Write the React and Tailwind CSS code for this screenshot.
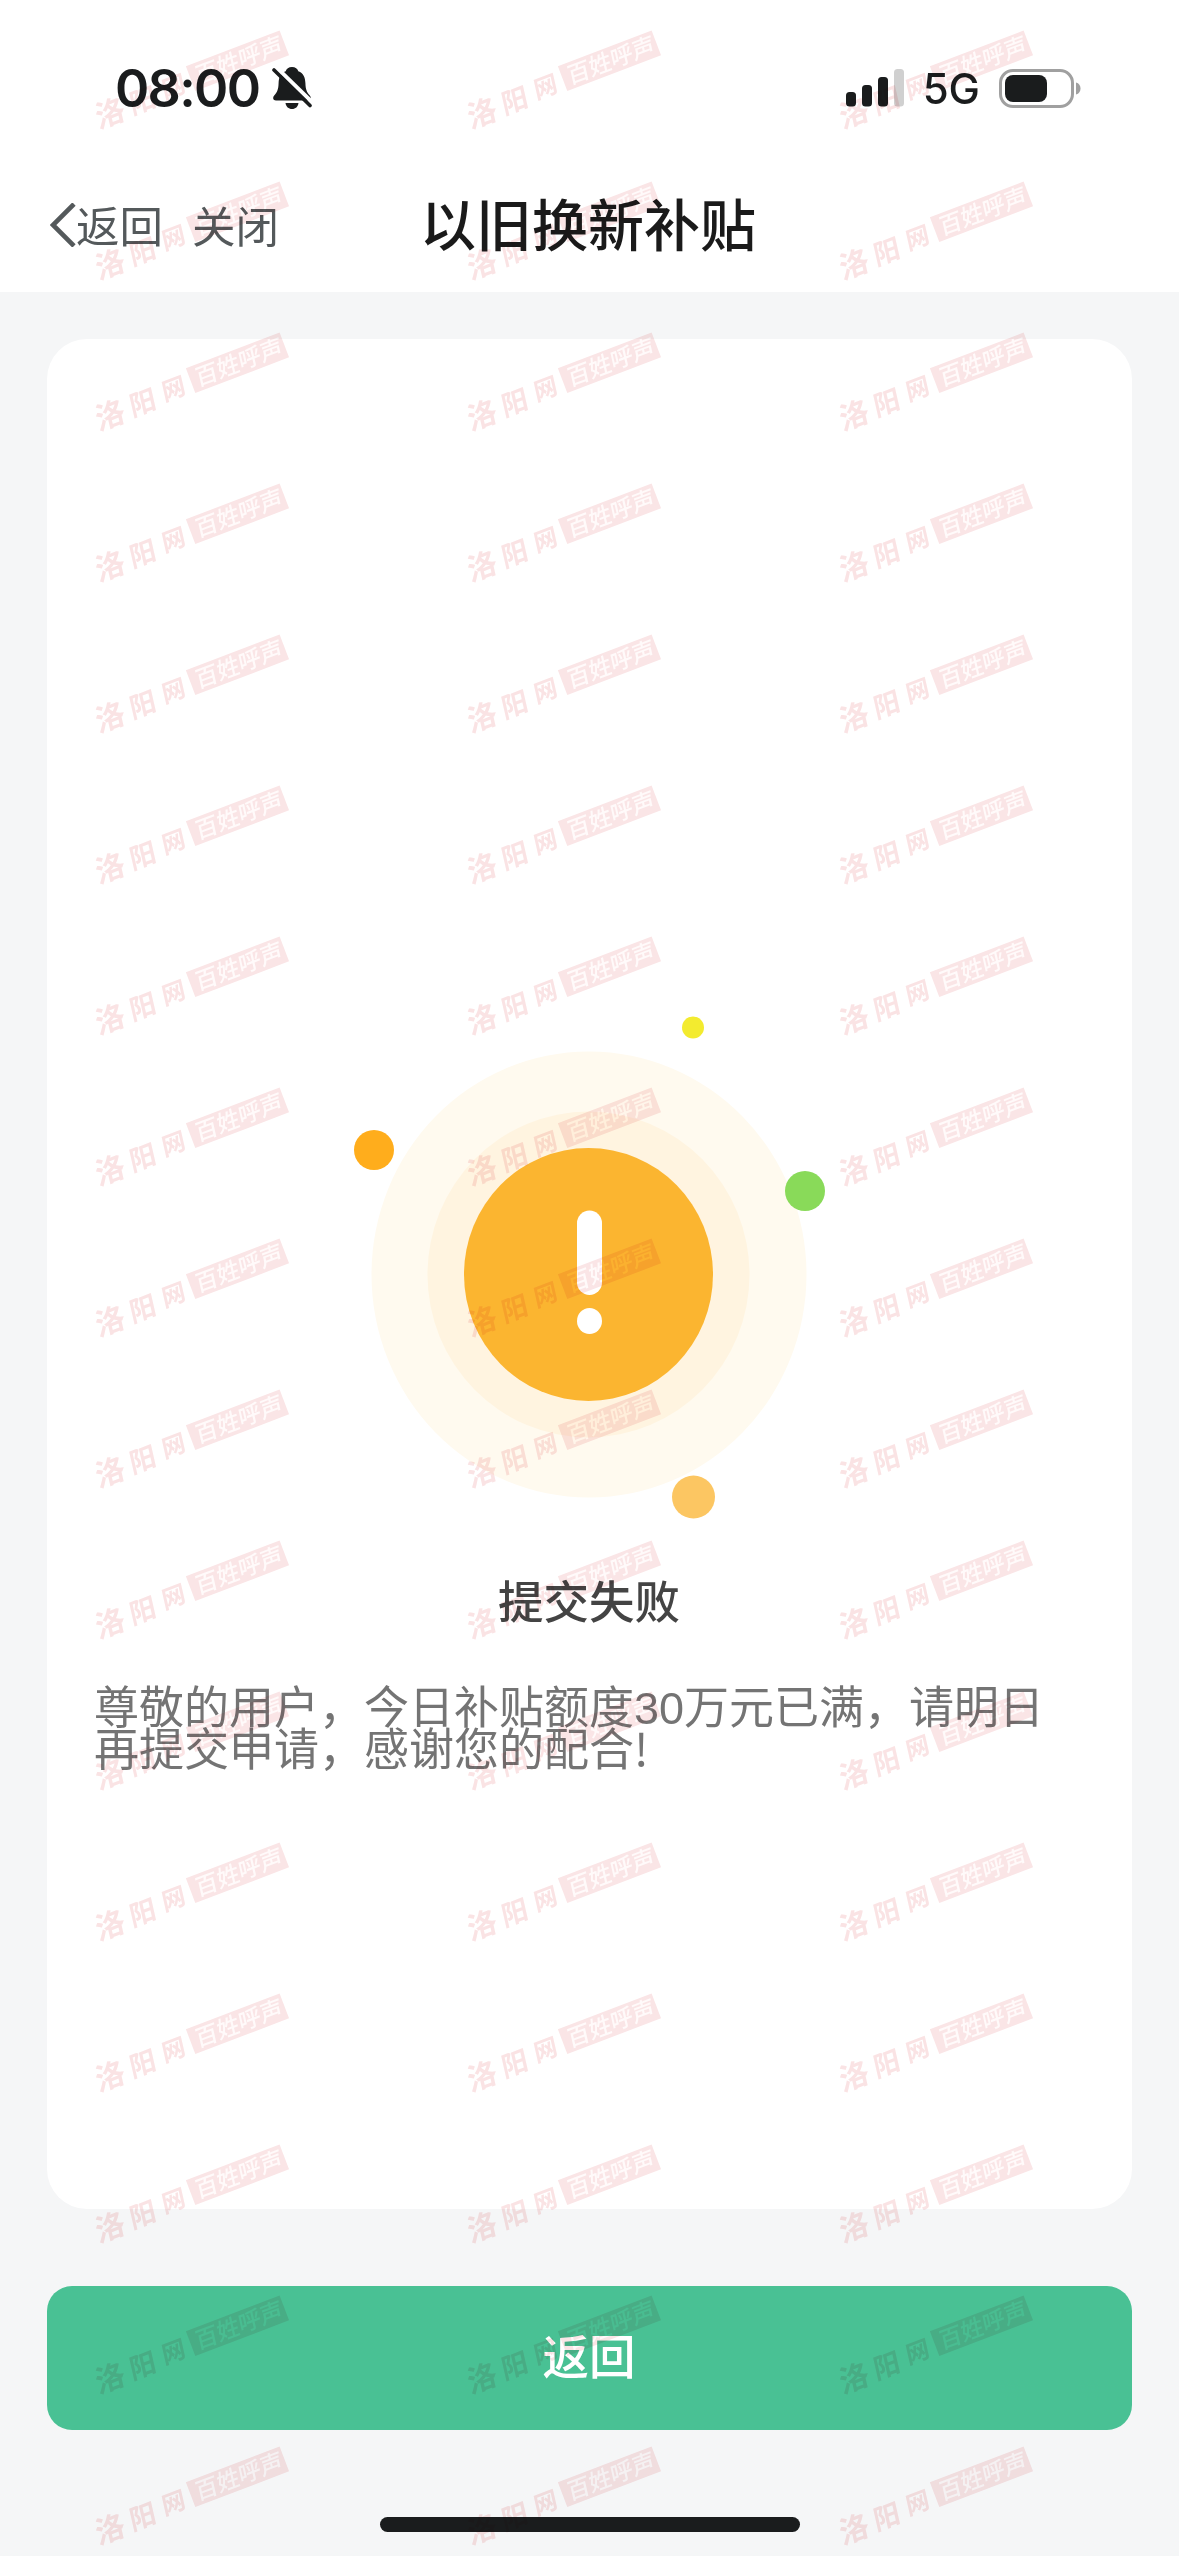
// src/pages/SubmitFailed.jsx
import React from "react";

const ROWS = 17;
const COLS = 3;

function BellOffIcon() {
  return (
    <svg viewBox="0 0 40 44" className="w-10 h-11" fill="none">
      <path
        d="M20 1c-3.400 0-5.600 1.800-6.300 4.300C8.600 7.200 6.800 11.500 6.600 17c-.2 6.500-1.200 8.800-4.400 12.600C.4 31.800 1 34.500 4 34.500h32c3 0 3.500-2.700 1.800-4.900-3.200-3.800-4.200-6.100-4.400-12.600-.2-5.500-2-9.800-7.100-11.700C25.600 2.800 23.400 1 20 1Z"
        fill="#1a1c1d"
      />
      <path d="M13.500 37h13c-.5 3.700-3 6-6.500 6s-6-2.300-6.500-6Z" fill="#1a1c1d" />
      <path d="M4.500 1.500 42 38" stroke="#fff" strokeWidth="4" />
      <path d="M2 4 38 39.500" stroke="#1a1c1d" strokeWidth="3.600" strokeLinecap="round" />
    </svg>
  );
}

function SignalIcon() {
  return (
    <svg viewBox="0 0 58 38" className="w-[58px] h-[38px]" fill="#1a1c1d">
      <rect x="0" y="23" width="10" height="14.500" rx="3.500" />
      <rect x="16" y="16" width="10" height="21.500" rx="3.500" />
      <rect x="32" y="8" width="10" height="29.500" rx="3.500" />
      <rect x="48" y="0" width="10" height="37.500" rx="3.500" fill="#d0d0d0" />
    </svg>
  );
}

function BatteryIcon() {
  return (
    <svg viewBox="0 0 82 39" className="w-[82px] h-[39px]">
      <rect x="1.500" y="1.500" width="72" height="36" rx="12.500" fill="#fff" stroke="#a0a0a0" strokeWidth="3" />
      <rect x="6" y="6" width="42" height="27" rx="8" fill="#1a1c1d" />
      <path d="M77 13.500c3 .8 4.500 3 4.500 6s-1.500 5.200-4.500 6Z" fill="#a0a0a0" />
    </svg>
  );
}

function WarningArt() {
  return (
    <svg viewBox="0 0 480 520" className="w-[480px] h-[520px]">
      <ellipse cx="239" cy="274.500" rx="217.500" ry="223" fill="#fffaef" />
      <ellipse cx="238.500" cy="274.500" rx="161" ry="163" fill="#fff4e0" />
      <ellipse cx="238.500" cy="274.500" rx="124.500" ry="126.500" fill="#fbb530" />
      <rect x="227" y="210.500" width="25" height="84.500" rx="12.500" fill="#fff" />
      <ellipse cx="239.500" cy="321" rx="12.500" ry="13" fill="#fff" />
      <circle cx="343" cy="27.500" r="11" fill="#f3eb2f" />
      <circle cx="24" cy="150" r="20" fill="#ffad1c" />
      <circle cx="455" cy="191" r="20" fill="#89da59" />
      <circle cx="343.500" cy="497" r="21.500" fill="#fcc662" />
    </svg>
  );
}

function Mark() {
  return (
    <svg viewBox="0 0 372 151" className="w-[372px] h-[151px]">
      <g
        transform="translate(195.300 91) rotate(-20.850)"
        fontFamily="'Noto Sans CJK SC', sans-serif"
        fontWeight="500"
        textAnchor="middle"
      >
        <rect x="0" y="-26.500" width="100.300" height="26.500" fill="#fae5e6" />
        <g fill="#fae3e4" fontWeight="700">
          <text transform="translate(-89 1) skewX(-8)" fontSize="30">洛</text>
          <text transform="translate(-54 0) skewX(-8)" fontSize="27">阳</text>
          <text transform="translate(-20 -3) skewX(-8)" fontSize="24">网</text>
        </g>
        <g fill="#fffafa" fontSize="23">
          <text transform="translate(16 -5) skewX(-8)">百</text>
          <text transform="translate(39 -5) skewX(-8)">姓</text>
          <text transform="translate(62 -5) skewX(-8)">呼</text>
          <text transform="translate(85 -5) skewX(-8)">声</text>
        </g>
      </g>
    </svg>
  );
}

function Watermark() {
  return (
    <div className="absolute inset-0 overflow-hidden pointer-events-none mix-blend-multiply">
      <div className="grid grid-cols-[372px_372px_372px]">
        {Array.from({ length: ROWS * COLS }).map((_, i) => (
          <Mark key={i} />
        ))}
      </div>
    </div>
  );
}

export default function App() {
  return (
    <div className="relative w-[1179px] h-[2556px] flex flex-col overflow-hidden bg-[#f5f6f7] font-['Noto_Sans_CJK_SC',sans-serif]">
      <header className="bg-white h-[292px] shrink-0">
        {/* status bar */}
        <div className="h-[176px] pl-[115px] pr-[98px] flex items-center justify-between text-[#1a1c1d]">
          <div className="flex items-center gap-[13px]">
            <span className="pt-px font-['Inter',sans-serif] font-semibold text-[52px] leading-none tracking-[-1.7px]">08:00</span>
            <BellOffIcon />
          </div>
          <div className="flex items-center">
            <SignalIcon />
            <span className="ml-[19px] mr-[19px] pt-0.5 font-['Inter',sans-serif] font-medium text-[42px] leading-none">5G</span>
            <BatteryIcon />
          </div>
        </div>

        {/* nav */}
        <div className="h-[96px] grid grid-cols-[1fr_auto_1fr] items-center">
          <div className="pt-0.5 pl-[50px] flex items-center text-[#54595b] text-[43.500px] leading-none">
            <svg viewBox="0 0 26 44" className="w-[26px] h-11" fill="none">
              <path d="M24 1 3 22l21 21" stroke="#54595b" strokeWidth="4.600" />
            </svg>
            <span>返回</span>
            <span className="ml-[29px]">关闭</span>
          </div>
          <h1 className="pb-[5px] pr-[3px] text-[56px] leading-none font-medium text-[#1a1a1a]">以旧换新补贴</h1>
          <div />
        </div>
      </header>

      <main className="flex-1 px-[47px] pt-[47px] flex flex-col">
        <section className="h-[1870px] rounded-[40px] bg-white px-12 pt-[661px] flex flex-col items-center">
          <WarningArt />
          <h2 className="mt-[55px] pr-px text-[45.500px] leading-[48px] font-medium text-[#444]">提交失败</h2>
          <div className="mt-[61px] -ml-px self-stretch text-[45px] leading-[42px] text-[#747474] whitespace-nowrap">
            <p className="h-[42px]">
              尊敬的用户，今日补贴额度<span className="font-['Liberation_Sans',sans-serif]">30</span>万元已满，请明日
            </p>
            <p className="h-[42px]">再提交申请，感谢您的配合!</p>
          </div>
        </section>

        <button className="mt-[77px] h-36 pb-[7px] pr-px rounded-[25px] bg-[#49c194] text-white text-[46.500px] leading-none font-medium">
          返回
        </button>

        <div className="mt-[87px] mx-auto w-[420px] h-[15px] rounded-full bg-[#1a1c1d]" />
      </main>

      <Watermark />
    </div>
  );
}
